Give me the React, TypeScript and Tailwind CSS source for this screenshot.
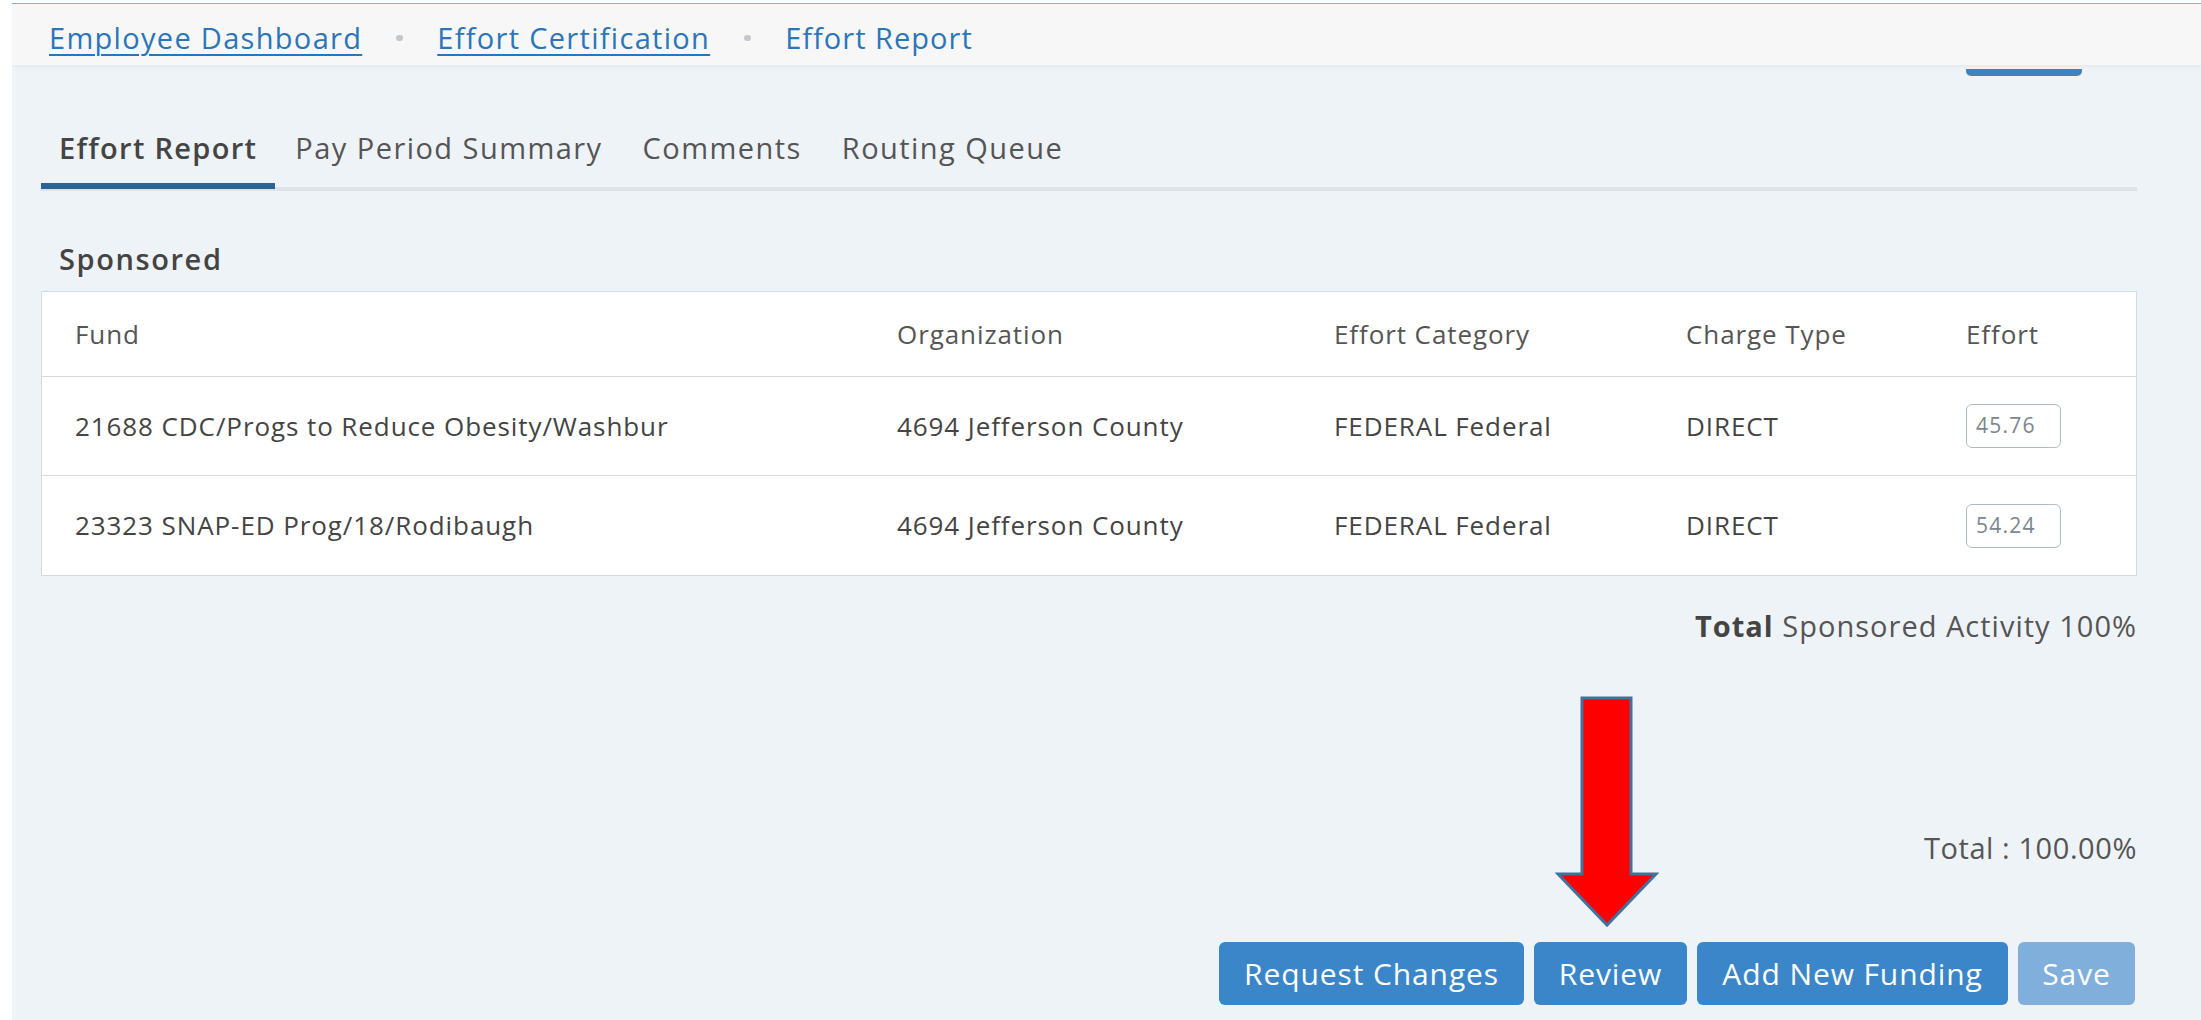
import React from "react";

const font = { fontFamily: '"Open Sans", "Noto Sans", Arial, sans-serif' };

const rows = [
  { fund: "21688 CDC/Progs to Reduce Obesity/Washbur", org: "4694 Jefferson County", category: "FEDERAL Federal", charge: "DIRECT", effort: "45.76" },
  { fund: "23323 SNAP-ED Prog/18/Rodibaugh", org: "4694 Jefferson County", category: "FEDERAL Federal", charge: "DIRECT", effort: "54.24" },
];

const tabs = ["Effort Report", "Pay Period Summary", "Comments", "Routing Queue"];

function Crumbs() {
  return (
    <div className="flex h-[61px] items-center gap-[34px] bg-[#f7f7f7] pl-[37px] pt-[7px] text-[29px] tracking-[0.045em] text-[#2a76b9] shadow-[0_2px_3px_rgba(0,0,0,0.04)]">
      <a className="underline underline-offset-[5px] decoration-[1.5px]">Employee Dashboard</a>
      <span className="h-[6px] w-[7px] rounded-full bg-[#c5c8cb]" />
      <a className="underline underline-offset-[5px] decoration-[1.5px]">Effort Certification</a>
      <span className="h-[6px] w-[7px] rounded-full bg-[#c5c8cb]" />
      <span className="tracking-[0.035em]">Effort Report</span>
    </div>
  );
}

function Tabs() {
  return (
    <div className="mt-[33px] flex h-[82px] shadow-[inset_0_-4px_0_#dde2e6]">
      {tabs.map((t, i) => (
        <div
          key={t}
          className={
            i === 0
              ? "flex h-[80px] items-center border-b-[6px] border-[#2a6496] px-[18px] pt-[4px] text-[29px] font-semibold tracking-[0.045em] text-[#444]"
              : "flex h-[80px] items-center border-b-[6px] border-transparent px-[20px] pt-[4px] text-[29px] tracking-[0.05em] text-[#555]"
          }
        >
          {t}
        </div>
      ))}
    </div>
  );
}

function EffortTable() {
  const cols = "grid grid-cols-[822px_437px_352px_280px_1fr] items-center";
  return (
    <div className="mt-[14px] border border-[#d6dbe0] bg-white text-[26px] tracking-[0.035em] text-[#444]">
      <div className={`${cols} h-[85px] border-b border-[#d6dbe0] text-[#555]`}>
        <div className="pl-[33px]">Fund</div>
        <div className="pl-[33px]">Organization</div>
        <div className="pl-[33px]">Effort Category</div>
        <div className="pl-[33px]">Charge Type</div>
        <div className="pl-[33px]">Effort</div>
      </div>
      {rows.map((r, i) => (
        <div key={r.fund} className={`${cols} h-[99px] ${i === 0 ? "border-b border-[#d6dbe0]" : ""}`}>
          <div className="pl-[33px]">{r.fund}</div>
          <div className="pl-[33px]">{r.org}</div>
          <div className="pl-[33px]">{r.category}</div>
          <div className="pl-[33px]">{r.charge}</div>
          <div className="pl-[33px]">
            <div className="flex h-[44px] w-[95px] items-center rounded-[6px] border-[1.5px] border-[#b3bcc5] px-[9px] text-[21px] tracking-[0.06em] text-[#7c8690]">
              {r.effort}
            </div>
          </div>
        </div>
      ))}
    </div>
  );
}

function Actions() {
  const btn = "flex h-[63px] items-center justify-center rounded-[6px] text-[30px] tracking-[0.03em] text-white";
  return (
    <div className="mt-[74px] flex justify-end gap-[10px] pr-[2px]">
      <button className={`${btn} w-[305px] bg-[#3a86c8]`}>Request Changes</button>
      <button className={`${btn} w-[153px] bg-[#3a86c8]`}>Review</button>
      <button className={`${btn} w-[311px] bg-[#3a86c8]`}>Add New Funding</button>
      <button className={`${btn} w-[117px] bg-[#80afdc]`}>Save</button>
    </div>
  );
}

function DownArrow() {
  return (
    <svg className="absolute left-[1555px] top-[696px]" width="104" height="232" viewBox="0 0 104 232">
      <polygon
        points="27,2 76,2 76,178 101,178 52,229 3,178 27,178"
        fill="#ff0000"
        stroke="#41719c"
        strokeWidth="3"
        strokeLinejoin="miter"
      />
    </svg>
  );
}

export default function App() {
  return (
    <div className="relative flex h-[1020px] w-full overflow-hidden bg-white" style={font}>
      <div className="w-[12px] shrink-0 bg-white" />
      <div className="flex-1 bg-[#eef3f8]">
        <div className="h-[3px] bg-white" />
        <div className="h-[1px] bg-[#7fb1de]" />
        <Crumbs />
        <div className="flex justify-end pr-[119px]">
          <div className="mt-[4px] h-[7px] w-[116px] rounded-b-[5px] bg-[#3f82c2]" />
        </div>

        <div className="pl-[29px] pr-[64px]">
          <Tabs />
          <div className="mt-[50px] pl-[18px] text-[29px] font-semibold leading-[36px] tracking-[0.055em] text-[#444]">Sponsored</div>
          <EffortTable />
          <div className="mt-[30px] text-right text-[29px] leading-[40px] tracking-[0.035em] text-[#555]">
            <span className="font-bold text-[#444]">Total</span> Sponsored Activity 100%
          </div>
          <div className="mt-[182px] text-right text-[29px] leading-[40px] tracking-[0.02em] text-[#555]">Total : 100.00%</div>
          <Actions />
        </div>
      </div>
      <DownArrow />
    </div>
  );
}
